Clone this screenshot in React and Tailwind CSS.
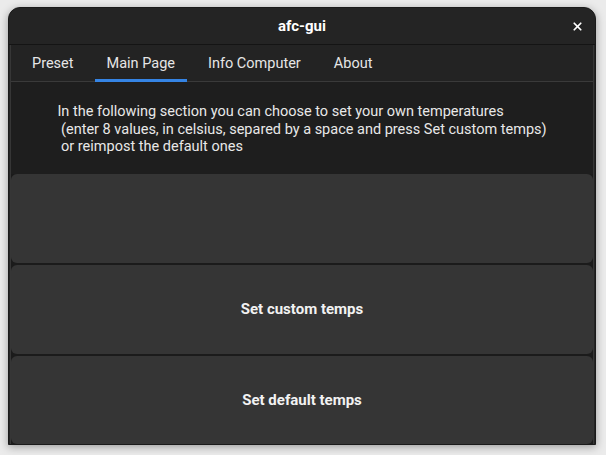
import React from "react";
import { X } from "lucide-react";

const tabs = ["Preset", "Main Page", "Info Computer", "About"];

export default function App() {
  return (
    <div
      className="w-[606px] h-[455px] bg-[#ebebeb] pt-[7px] pl-[8px] overflow-hidden"
      style={{ fontFamily: "Roboto, 'Noto Sans', sans-serif" }}
    >
      <div className="w-[588px] h-[438px] rounded-t-[12px] bg-[#242424] flex flex-col overflow-hidden shadow-[0_2px_8px_rgba(0,0,0,0.35)] border border-[#1a1a1a]">
        {/* header bar */}
        <div className="h-[37px] shrink-0 relative flex items-center justify-center border-b border-[#141414]">
          <span className="text-[15px] font-bold text-white">afc-gui</span>
          <button className="absolute right-[10px] top-[10px] w-[16px] h-[16px] flex items-center justify-center text-white">
            <X size={13} strokeWidth={3.2} />
          </button>
        </div>

        {/* notebook */}
        <div className="flex-1 flex flex-col mx-[1px] border-x border-[#363636] bg-[#1e1e1e]">
          <div className="h-[37px] shrink-0 flex items-stretch gap-[9px] pl-[9px] bg-[#232323] border-b border-[#3a3a3a]">
            {tabs.map((t) => (
              <div
                key={t}
                className={
                  "px-[12px] pt-[4px] flex items-center text-[14.5px] text-[#e6e6e6] border-b-[3px] -mb-px " +
                  (t === "Main Page" ? "border-[#3584e4]" : "border-transparent")
                }
              >
                {t}
              </div>
            ))}
          </div>

          <div className="h-[92px] shrink-0 flex justify-center pt-[21px]">
            <p className="whitespace-pre text-[14.5px] leading-[17.7px] text-[#e8e8e8]">
              {"In the following section you can choose to set your own temperatures\n (enter 8 values, in celsius, separed by a space and press Set custom temps)\n or reimpost the default ones"}
            </p>
          </div>

          <div className="flex-1 flex flex-col gap-[2px] bg-[#1b1b1b]">
            <input
              className="h-[89px] shrink-0 rounded-[6px] bg-[#353535] outline-none px-3 text-white"
              aria-label="custom temps"
            />
            <button className="h-[89px] shrink-0 rounded-[6px] bg-[#353535] text-[15px] font-bold text-[#f2f2f2]">
              Set custom temps
            </button>
            <button className="flex-1 rounded-[6px] bg-[#353535] text-[15px] font-bold text-[#f2f2f2]">
              Set default temps
            </button>
          </div>
        </div>
      </div>
    </div>
  );
}
